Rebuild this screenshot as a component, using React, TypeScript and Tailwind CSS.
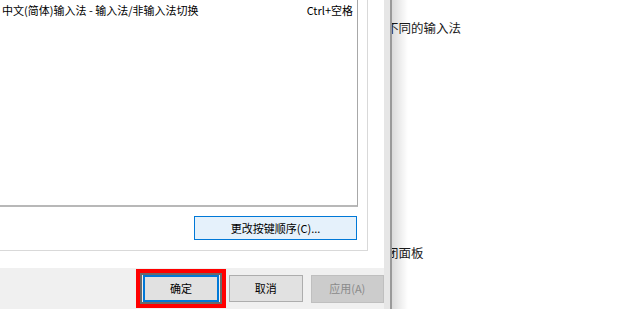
export default function App() {
  return (
    <div
      className="relative flex h-[309px] w-[620px] overflow-hidden bg-white text-black"
      style={{ fontFamily: '"Noto Sans CJK SC", "Noto Sans", sans-serif' }}
    >
      {/* Dialog */}
      <div className="relative z-10 flex h-full w-[392px] shrink-0">
        <div className="flex w-[384px] flex-col bg-white">
          {/* Tab page */}
          <div className="flex h-[251px] w-[368px] flex-col border-r border-b border-[#d9d9d9]">
            <div className="h-[207px] w-[358px] border-r border-b-2 border-r-[#a8a8a8] border-b-[#b8b8b8] bg-white">
              <div className="flex h-[20px] items-center justify-between pl-[2px] pr-[4px] text-[11px]">
                <span>中文(简体)输入法 - 输入法/非输入法切换</span>
                <span>Ctrl+空格</span>
              </div>
            </div>
            <div className="mt-[9px] flex w-[357px] justify-end">
              <button className="flex h-[24px] w-[163px] items-center justify-center border border-[#0078d7] bg-[#e5f1fb] text-[11px]">
                更改按键顺序(C)...
              </button>
            </div>
          </div>
          <div className="h-[17px]" />
          {/* Footer */}
          <div className="flex flex-1 items-center bg-[#f0f0f0] pl-[136px]">
            <div className="flex h-[39px] w-[90px] items-center border-4 border-[#ff0000]">
              <div className="flex h-full w-full items-center justify-center border-2 border-[#6a6a6a] px-px">
                <button className="flex h-[27px] w-[76px] items-center justify-center border-2 border-[#0078d7] bg-[#e1e1e1] text-[11px]">
                  确定
                </button>
              </div>
            </div>
            <button className="ml-[3px] flex h-[27px] w-[74px] items-center justify-center border border-[#adadad] bg-[#e1e1e1] text-[11px]">
              取消
            </button>
            <button className="ml-[8px] flex h-[28px] w-[74px] items-center justify-center border border-[#bfbfbf] bg-[#cccccc] text-[11px] text-[#8a8a8a]">
              应用(A)
            </button>
          </div>
        </div>
        {/* Frame edge */}
        <div className="w-[6px] bg-[#e6e6e6]" />
        <div className="w-[2px] bg-[#9a9a9a]" />
        <div className="pointer-events-none absolute top-0 left-[392px] h-full w-[16px] bg-gradient-to-r from-[rgba(0,0,0,0.14)] to-transparent" />
      </div>

      {/* Background window */}
      <div className="-ml-[6px] flex flex-1 flex-col text-[12.5px] leading-[18px] text-[#1a1a1a]">
        <div className="mt-[19px]">不同的输入法</div>
        <div className="mt-[207px]">闭面板</div>
      </div>
    </div>
  );
}
